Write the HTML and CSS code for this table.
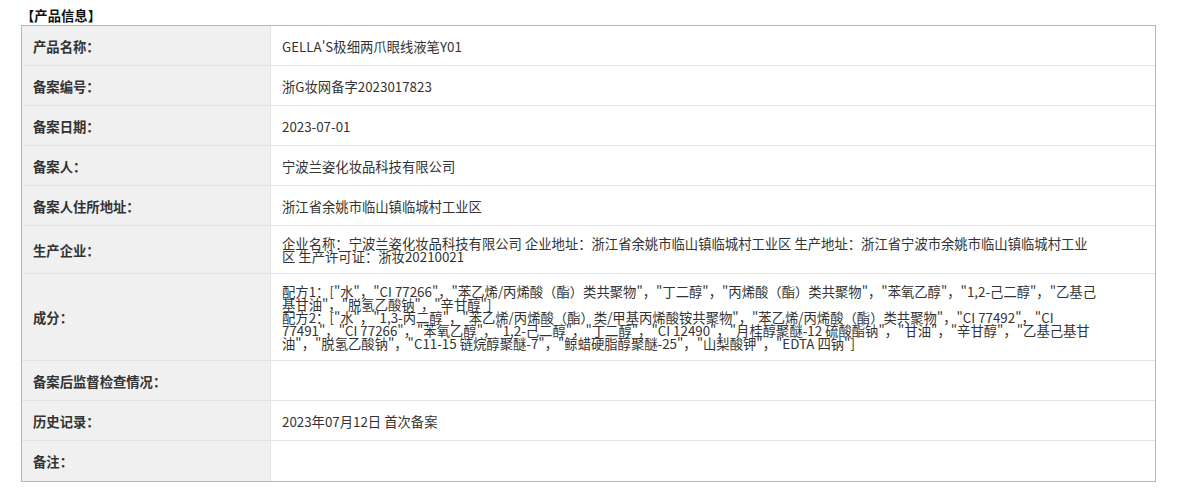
FILE: index.html
```html
<!DOCTYPE html>
<html lang="zh-CN">
<head>
    <meta charset="UTF-8">
    <meta name="viewport" content="width=device-width, initial-scale=1.0">
    <title>产品信息</title>
    <link rel="stylesheet" href="styles.css">
</head>
<body>
    <div class="page">
        <div class="section-title">【产品信息】</div>
        <div class="info">
            <div class="label">产品名称：</div>
            <div class="value">GELLA'S极细两爪眼线液笔Y01</div>

            <div class="label">备案编号：</div>
            <div class="value">浙G妆网备字2023017823</div>

            <div class="label">备案日期：</div>
            <div class="value">2023-07-01</div>

            <div class="label">备案人：</div>
            <div class="value">宁波兰姿化妆品科技有限公司</div>

            <div class="label">备案人住所地址：</div>
            <div class="value">浙江省余姚市临山镇临城村工业区</div>

            <div class="label">生产企业：</div>
            <div class="value">企业名称：宁波兰姿化妆品科技有限公司 企业地址：浙江省余姚市临山镇临城村工业区 生产地址：浙江省宁波市余姚市临山镇临城村工业区 生产许可证：浙妆20210021</div>

            <div class="label">成分：</div>
            <div class="value">配方1：["水"，"CI 77266"，"苯乙烯/丙烯酸（酯）类共聚物"，"丁二醇"，"丙烯酸（酯）类共聚物"，"苯氧乙醇"，"1,2-己二醇"，"乙基己基甘油"，"脱氢乙酸钠"，"辛甘醇"]<br>配方2：["水"，"1,3-丙二醇"，"苯乙烯/丙烯酸（酯）类/甲基丙烯酸铵共聚物"，"苯乙烯/丙烯酸（酯）类共聚物"，"CI 77492"，"CI 77491"，"CI 77266"，"苯氧乙醇"，"1,2-己二醇"，"丁二醇"，"CI 12490"，"月桂醇聚醚-12 硫酸酯钠"，"甘油"，"辛甘醇"，"乙基己基甘油"，"脱氢乙酸钠"，"C11-15 链烷醇聚醚-7"，"鲸蜡硬脂醇聚醚-25"，"山梨酸钾"，"EDTA 四钠"]</div>

            <div class="label">备案后监督检查情况：</div>
            <div class="value"></div>

            <div class="label">历史记录：</div>
            <div class="value">2023年07月12日 首次备案</div>

            <div class="label last">备注：</div>
            <div class="value last"></div>
        </div>
    </div>
</body>
</html>
```

FILE: styles.css
```css
body {
    margin: 0;
    font-family: "Noto Sans CJK SC", "Liberation Sans", sans-serif;
    font-size: 10pt;
    color: #333;
    background-color: #fff;
}

.page {
    padding: 6px 22px 0 21px;
}

.section-title {
    font-weight: bold;
    color: #111;
    line-height: 19px;
}

.info {
    display: grid;
    grid-template-columns: 249px 1fr;
    border: 1px solid #99bbe8;
}

    .info .label,
    .info .value {
        display: flex;
        align-items: center;
        min-height: 40px;
        box-sizing: border-box;
        padding: 11px 11px 10px;
        line-height: 13px;
        border-bottom: 1px solid #e3e3e3;
    }

    .info .label {
        background-color: #f0f0f0;
        border-right: 1px solid #e3e3e3;
        font-weight: bold;
    }

    .info .value {
        padding-right: 58px;
    }

    .info .last {
        border-bottom: none;
    }
```
